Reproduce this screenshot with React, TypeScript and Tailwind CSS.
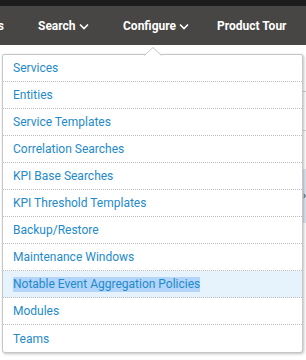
import React from "react";

const items = [
  "Services",
  "Entities",
  "Service Templates",
  "Correlation Searches",
  "KPI Base Searches",
  "KPI Threshold Templates",
  "Backup/Restore",
  "Maintenance Windows",
  "Notable Event Aggregation Policies",
  "Modules",
  "Teams",
];

function Chevron() {
  return (
    <svg width="10" height="7" viewBox="0 0 10 7" className="ml-[3px] mt-[1px]">
      <path d="M1 1.5 L5 5.5 L9 1.5" fill="none" stroke="white" strokeWidth="1.6" />
    </svg>
  );
}

export default function App() {
  return (
    <div
      className="relative w-[306px] h-[360px] overflow-hidden bg-white"
      style={{ fontFamily: "Roboto, 'Liberation Sans', sans-serif" }}
    >
      <div className="h-[6px] bg-[#1c1c1c]" />
      <div className="h-[39px] bg-[#474644] flex items-center text-white text-[12px] font-bold">
        <div className="w-[4px] overflow-hidden flex justify-end">
          <span className="shrink-0">Apps</span>
        </div>
        <div className="ml-[34px] w-[85px] flex items-center">
          <span>Search</span>
          <Chevron />
        </div>
        <div className="w-[94px] flex items-center">
          <span>Configure</span>
          <Chevron />
        </div>
        <div className="flex items-center">
          <span className="whitespace-nowrap">Product Tour</span>
        </div>
      </div>

      {/* page content behind the menu */}
      <div className="flex flex-col items-end">
        <div className="h-[47px] w-[6px] border-b border-[#d0d0d0]" />
        <div className="h-[39px] w-[6px] border-b border-[#d6d6d6]" />
        <div className="h-[38px] w-[6px]" />
        <div className="h-[54px] w-[6px] bg-[#dce6f2] flex items-center justify-end">
          <span className="text-[10px] text-[#333] leading-none">›</span>
        </div>
      </div>

      {/* dropdown menu */}
      <div className="absolute left-[2px] top-[54px] w-[301px] rounded-b-[3px] rounded-t-[2px] border border-[#c6c6c6] bg-white shadow-[1px_1px_3px_rgba(0,0,0,0.25)]">
        <svg
          width="18"
          height="9"
          viewBox="0 0 18 9"
          className="absolute left-[141px] top-[-8px]"
        >
          <path d="M0 9 L9 0.5 L18 9" fill="white" stroke="#c6c6c6" strokeWidth="1" />
          <rect x="0" y="8.5" width="18" height="1" fill="white" />
        </svg>
        {items.map((t, i) => {
          const hl = t.startsWith("Notable");
          return (
            <div
              key={t}
              className={
                "h-[27px] flex items-center pl-[10px] text-[12px] text-[#1e8acb] " +
                (i < items.length - 1 ? "border-b border-dotted border-[#bdbdbd] " : "") +
                (hl ? "bg-[#e6f3fd]" : "")
              }
            >
              {hl ? (
                <span className="bg-[#b3d5f9] leading-[15px]">{t}</span>
              ) : (
                <span>{t}</span>
              )}
            </div>
          );
        })}
      </div>
    </div>
  );
}
